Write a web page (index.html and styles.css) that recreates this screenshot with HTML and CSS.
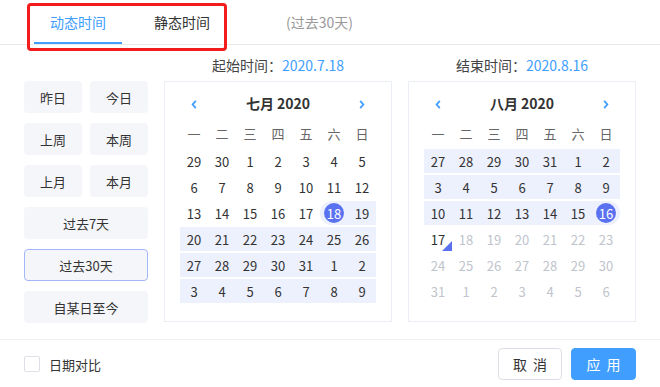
FILE: index.html
```html
<!DOCTYPE html>
<html lang="zh-CN">
  <head>
    <meta charset="UTF-8" />
    <meta name="viewport" content="width=device-width, initial-scale=1.0" />
    <title>日期选择</title>
    <link rel="stylesheet" href="styles.css">
  </head>
  <body>
    <div class="panel">
      <div class="tabs">
        <div class="tab active">动态时间</div>
        <div class="tab">静态时间</div>
        <span class="range-hint">(过去30天)</span>
      </div>
      <div class="mark"></div>

      <div class="main">
        <div class="shortcuts">
          <button type="button" class="shortcut">昨日</button>
          <button type="button" class="shortcut">今日</button>
          <button type="button" class="shortcut">上周</button>
          <button type="button" class="shortcut">本周</button>
          <button type="button" class="shortcut">上月</button>
          <button type="button" class="shortcut">本月</button>
          <button type="button" class="shortcut wide">过去7天</button>
          <button type="button" class="shortcut wide active">过去30天</button>
          <button type="button" class="shortcut wide">自某日至今</button>
        </div>

        <div class="cals">
          <!-- 开始月份 -->
          <div class="cal-col">
            <div class="cal-label">起始时间：<span class="val">2020.7.18</span></div>
            <div class="cal">
              <div class="cal-head">
                <span class="arrow"><svg viewBox="0 0 6 10"><path d="M5 1 1.5 5 5 9" /></svg></span>
                <span class="title">七月 2020</span>
                <span class="arrow"><svg viewBox="0 0 6 10"><path d="M1 1 4.5 5 1 9" /></svg></span>
              </div>
              <div class="weekdays"><span>一</span><span>二</span><span>三</span><span>四</span><span>五</span><span>六</span><span>日</span></div>
              <div class="week"><span class="d">29</span><span class="d">30</span><span class="d">1</span><span class="d">2</span><span class="d">3</span><span class="d">4</span><span class="d">5</span></div>
              <div class="week"><span class="d">6</span><span class="d">7</span><span class="d">8</span><span class="d">9</span><span class="d">10</span><span class="d">11</span><span class="d">12</span></div>
              <div class="week"><span class="d">13</span><span class="d">14</span><span class="d">15</span><span class="d">16</span><span class="d">17</span><span class="d in start"><span class="dot">18</span></span><span class="d in">19</span></div>
              <div class="week band"><span class="d">20</span><span class="d">21</span><span class="d">22</span><span class="d">23</span><span class="d">24</span><span class="d">25</span><span class="d">26</span></div>
              <div class="week band"><span class="d">27</span><span class="d">28</span><span class="d">29</span><span class="d">30</span><span class="d">31</span><span class="d">1</span><span class="d">2</span></div>
              <div class="week band"><span class="d">3</span><span class="d">4</span><span class="d">5</span><span class="d">6</span><span class="d">7</span><span class="d">8</span><span class="d">9</span></div>
            </div>
          </div>

          <!-- 结束月份 -->
          <div class="cal-col">
            <div class="cal-label">结束时间：<span class="val">2020.8.16</span></div>
            <div class="cal">
              <div class="cal-head">
                <span class="arrow"><svg viewBox="0 0 6 10"><path d="M5 1 1.5 5 5 9" /></svg></span>
                <span class="title">八月 2020</span>
                <span class="arrow"><svg viewBox="0 0 6 10"><path d="M1 1 4.5 5 1 9" /></svg></span>
              </div>
              <div class="weekdays"><span>一</span><span>二</span><span>三</span><span>四</span><span>五</span><span>六</span><span>日</span></div>
              <div class="week band"><span class="d">27</span><span class="d">28</span><span class="d">29</span><span class="d">30</span><span class="d">31</span><span class="d">1</span><span class="d">2</span></div>
              <div class="week band"><span class="d">3</span><span class="d">4</span><span class="d">5</span><span class="d">6</span><span class="d">7</span><span class="d">8</span><span class="d">9</span></div>
              <div class="week band to-end"><span class="d">10</span><span class="d">11</span><span class="d">12</span><span class="d">13</span><span class="d">14</span><span class="d">15</span><span class="d"><span class="dot">16</span></span></div>
              <div class="week"><span class="d today">17</span><span class="d off">18</span><span class="d off">19</span><span class="d off">20</span><span class="d off">21</span><span class="d off">22</span><span class="d off">23</span></div>
              <div class="week"><span class="d off">24</span><span class="d off">25</span><span class="d off">26</span><span class="d off">27</span><span class="d off">28</span><span class="d off">29</span><span class="d off">30</span></div>
              <div class="week"><span class="d off">31</span><span class="d off">1</span><span class="d off">2</span><span class="d off">3</span><span class="d off">4</span><span class="d off">5</span><span class="d off">6</span></div>
            </div>
          </div>
        </div>
      </div>

      <div class="footer">
        <label class="compare"><span class="check"></span>日期对比</label>
        <button type="button" class="btn">取消</button>
        <button type="button" class="btn primary">应用</button>
      </div>
    </div>
  </body>
</html>
```

FILE: styles.css
```css
:root {
  --blue: #409eff;
  --pick: #5a72f0;
  --band: #edf0fd;
  --line: #ebeef5;
}

body {
  margin: 0;
  font-family: "Noto Sans CJK SC", "Noto Sans", sans-serif;
  color: #333;
  background: #fff;
}

.panel {
  position: relative;
  width: 660px;
  height: 387px;
}

/* 顶部标签 */
.tabs {
  display: flex;
  align-items: center;
  height: 44px;
  padding-left: 34px;
  border-bottom: 1px solid #e9e9e9;
  font-size: 14px;
}

.tab {
  position: relative;
  width: 88px;
  height: 44px;
  display: flex;
  align-items: center;
  justify-content: center;
}

.tab + .tab {
  margin-left: 16px;
}

.tab.active {
  color: var(--blue);
}

.tab.active::after {
  content: "";
  position: absolute;
  left: 0;
  right: 0;
  bottom: 0;
  height: 2px;
  background: var(--blue);
}

.range-hint {
  margin-left: 60px;
  color: #999;
}

.mark {
  position: absolute;
  left: 27px;
  top: 3px;
  width: 200px;
  height: 48px;
  box-sizing: border-box;
  border: 3px solid #f21c1c;
  border-radius: 4px;
}

.main {
  display: flex;
  gap: 16px;
  padding: 0 24px;
}

/* 快捷选项 */
.shortcuts {
  width: 124px;
  margin-top: 36px;
  display: grid;
  grid-template-columns: 58px 58px;
  gap: 10px 8px;
  align-content: start;
}

.shortcut {
  height: 32px;
  padding: 0;
  border: 1px solid transparent;
  border-radius: 4px;
  background: #f5f6fa;
  font-family: inherit;
  font-size: 13px;
  color: #333;
}

.shortcut.wide {
  grid-column: span 2;
}

.shortcut.active {
  border-color: #a3b6fa;
}

/* 日历 */
.cals {
  display: flex;
  gap: 16px;
}

.cal-col {
  width: 228px;
}

.cal-label {
  height: 36px;
  box-sizing: border-box;
  padding-top: 4px;
  display: flex;
  align-items: center;
  justify-content: center;
  font-size: 14px;
  color: #444;
}

.cal-label .val {
  color: var(--blue);
}

.cal {
  height: 241px;
  box-sizing: border-box;
  border: 1px solid var(--line);
  padding: 8px 15px 5px;
}

.cal-head {
  height: 26px;
  display: flex;
  align-items: center;
}

.arrow {
  width: 28px;
  display: flex;
  justify-content: center;
  padding-top: 3px;
}

.arrow svg {
  width: 6px;
  height: 9px;
  fill: none;
  stroke: var(--blue);
  stroke-width: 2;
}

.title {
  flex: 1;
  text-align: center;
  font-size: 14px;
  font-weight: bold;
  color: #333;
}

.weekdays,
.week {
  display: grid;
  grid-template-columns: repeat(7, 28px);
}

.weekdays {
  height: 28px;
  margin: 3px 0 1px;
  align-items: center;
  justify-items: center;
  font-size: 13px;
  color: #666;
}

.week {
  height: 24px;
  margin: 2px 0;
}

.band,
.d.in {
  background: var(--band);
}

.band.to-end {
  border-radius: 0 12px 12px 0;
}

.d {
  position: relative;
  display: flex;
  align-items: center;
  justify-content: center;
  font-size: 13px;
}

.d.start {
  border-radius: 12px 0 0 12px;
}

.dot {
  width: 20px;
  height: 20px;
  border-radius: 50%;
  background: var(--pick);
  color: #fff;
  display: flex;
  align-items: center;
  justify-content: center;
}

.off {
  color: #c0c4cc;
}

.today::after {
  content: "";
  position: absolute;
  right: 0;
  bottom: 0;
  border-style: solid;
  border-width: 0 0 10px 10px;
  border-color: transparent transparent var(--pick) transparent;
}

/* 底部 */
.footer {
  margin-top: 16px;
  height: 48px;
  border-top: 1px solid #f2f2f2;
  padding: 0 24px;
  display: flex;
  align-items: center;
}

.compare {
  display: flex;
  align-items: center;
  font-size: 13px;
  color: #333;
  margin-right: auto;
}

.check {
  width: 16px;
  height: 16px;
  box-sizing: border-box;
  border: 1px solid #dcdfe6;
  border-radius: 2px;
  margin-right: 9px;
}

.btn {
  width: 64px;
  height: 32px;
  padding: 0 0 0 6px;
  border: 1px solid #dcdfe6;
  border-radius: 4px;
  background: #fff;
  font-family: inherit;
  font-size: 14px;
  letter-spacing: 6px;
  color: #333;
}

.btn.primary {
  width: 65px;
  margin-left: 9px;
  border-color: var(--blue);
  background: var(--blue);
  color: #fff;
}
```
